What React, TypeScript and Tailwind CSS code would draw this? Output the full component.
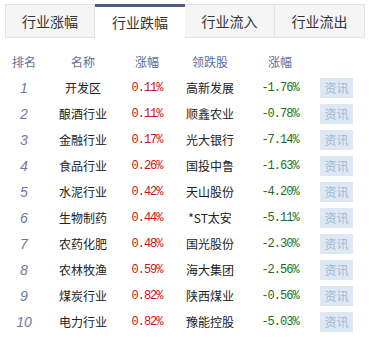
import React, { useState } from 'react';

const tabs = ['行业涨幅', '行业跌幅', '行业流入', '行业流出'];

const rows = [
  { rank: 1, name: '开发区', chg: '0.11%', stock: '高新发展', schg: '-1.76%' },
  { rank: 2, name: '酿酒行业', chg: '0.11%', stock: '顺鑫农业', schg: '-0.78%' },
  { rank: 3, name: '金融行业', chg: '0.17%', stock: '光大银行', schg: '-7.14%' },
  { rank: 4, name: '食品行业', chg: '0.26%', stock: '国投中鲁', schg: '-1.63%' },
  { rank: 5, name: '水泥行业', chg: '0.42%', stock: '天山股份', schg: '-4.20%' },
  { rank: 6, name: '生物制药', chg: '0.44%', stock: '*ST太安', schg: '-5.11%' },
  { rank: 7, name: '农药化肥', chg: '0.48%', stock: '国光股份', schg: '-2.30%' },
  { rank: 8, name: '农林牧渔', chg: '0.59%', stock: '海大集团', schg: '-2.56%' },
  { rank: 9, name: '煤炭行业', chg: '0.82%', stock: '陕西煤业', schg: '-0.56%' },
  { rank: 10, name: '电力行业', chg: '0.82%', stock: '豫能控股', schg: '-5.03%' },
];

const cjk = "font-['SimSun','Noto_Sans_CJK_SC',sans-serif]";
const mono = "font-['Liberation_Mono','Noto_Sans_CJK_SC',monospace]";

export default function App() {
  const [active, setActive] = useState(1);

  return (
    <div className={`w-[370px] h-[339px] bg-white ${cjk}`}>
      {/* tabs */}
      <div className="pt-[4px] px-[5px]">
        <div className="grid grid-cols-4 h-[34px]">
          {tabs.map((t, i) => (
            <button
              key={t}
              onClick={() => setActive(i)}
              className={`flex items-center justify-center text-[14px] text-[#333] border-[#e3e3e3] ${
                i === active
                  ? 'bg-white border-t-[3px] border-t-[#4f5d85] pb-[1px]'
                  : 'bg-[#f5f5f5] border border-l-0 first:border-l'
              }`}
            >
              {t}
            </button>
          ))}
        </div>
      </div>

      {/* table */}
      <div className="mt-[11px] px-[5px] text-[12px]">
        <div className="flex h-[26px] items-center text-[#5b6d9c]">
          <div className="w-[38px] text-center">排名</div>
          <div className="w-[80px] text-center">名称</div>
          <div className="w-[48px] text-center">涨幅</div>
          <div className="w-[78px] text-center">领跌股</div>
          <div className="w-[62px] text-center">涨幅</div>
          <div className="w-[51px]"></div>
        </div>
        {rows.map((r) => (
          <div key={r.rank} className="flex h-[26px] items-center">
            <div className="w-[38px] text-center italic text-[14px] text-[#6b78a8] font-['Liberation_Sans',sans-serif]">
              {r.rank}
            </div>
            <div className="w-[80px] text-center text-[#222]">{r.name}</div>
            <div className={`w-[48px] text-center text-[12px] text-[#c81414] ${mono} tracking-[-1px]`}>{r.chg}</div>
            <div className="w-[78px] text-center text-[#222]">{r.stock}</div>
            <div className={`w-[62px] text-center text-[12px] text-[#137313] ${mono} tracking-[-1px]`}>{r.schg}</div>
            <div className="w-[51px] flex justify-center">
              <span className="w-[33px] h-[20px] flex items-center justify-center bg-[#dde8f4] text-[#9fb7d3] text-[12px]">
                资讯
              </span>
            </div>
          </div>
        ))}
      </div>
    </div>
  );
}
